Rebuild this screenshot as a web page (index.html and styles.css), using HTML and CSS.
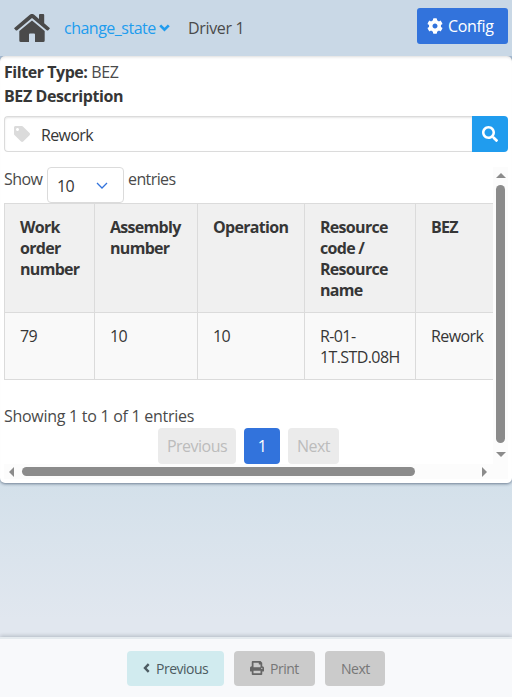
FILE: index.html
```html
<!DOCTYPE html>
<html lang="en">
<head>
<meta charset="utf-8">
<title>Work orders</title>
<link rel="stylesheet" href="styles.css">
</head>
<body>
<header class="navbar">
  <svg class="home" viewBox="0 0 36 28"><path d="M0 14.2 15.8.8Q18 -.9 20.2.8L25 4.900V1Q25 0 26 0H29.200Q30.200 0 30.200 1V9.300L36 14.200 34.300 16.200Q33.500 16.800 32.700 16.200L18 3.900 3.300 16.200Q2.500 16.800 1.700 16.200Z"/><path d="M5.300 17 18 6.500 30.700 17V26.500Q30.700 28 29.200 28H21V20.500Q21 19.500 20 19.500H16Q15 19.500 15 20.500V28H6.800Q5.300 28 5.300 26.500Z"/></svg>
  <a class="state">change_state</a>
  <svg class="chev" viewBox="0 0 11 8"><path d="m1.200 1.400 4.300 4.300 4.300-4.300"/></svg>
  <span class="driver">Driver 1</span>
  <button class="config"><svg viewBox="0 0 512 512"><path d="M487.400 315.700l-42.600-24.600c4.300-23.200 4.300-47 0-70.200l42.600-24.600c4.900-2.800 7.100-8.600 5.500-14-11.100-35.600-30-67.800-54.700-94.600-3.800-4.100-10-5.100-14.800-2.300L380.800 110c-17.900-15.400-38.500-27.300-60.800-35.100V25.800c0-5.600-3.900-10.500-9.400-11.700-36.700-8.200-74.300-7.800-109.200 0-5.500 1.200-9.400 6.100-9.400 11.700V75c-22.200 7.900-42.800 19.800-60.800 35.100L88.700 85.500c-4.900-2.800-11-1.900-14.800 2.300-24.700 26.700-43.600 58.900-54.700 94.600-1.700 5.400.6 11.200 5.500 14L67.300 221c-4.300 23.200-4.300 47 0 70.200l-42.600 24.600c-4.900 2.800-7.100 8.600-5.500 14 11.100 35.600 30 67.800 54.700 94.600 3.800 4.100 10 5.100 14.800 2.300l42.600-24.600c17.900 15.400 38.500 27.300 60.800 35.100v49.200c0 5.600 3.900 10.500 9.400 11.700 36.700 8.200 74.300 7.800 109.200 0 5.500-1.200 9.400-6.100 9.400-11.700v-49.200c22.200-7.900 42.800-19.800 60.800-35.100l42.600 24.600c4.900 2.800 11 1.900 14.800-2.300 24.700-26.700 43.600-58.900 54.700-94.600 1.500-5.500-.7-11.300-5.600-14.100zM256 336c-44.100 0-80-35.900-80-80s35.900-80 80-80 80 35.900 80 80-35.900 80-80 80z"/></svg>Config</button>
</header>
<main class="card">
  <div class="line"><strong class="filter">Filter Type:</strong> <span class="bezv">BEZ</span></div>
  <div class="line"><strong class="desc">BEZ Description</strong></div>
  <div class="search">
    <div class="field"><svg viewBox="0 0 512 512"><path d="M0 252.100V48C0 21.500 21.500 0 48 0h204.100a48 48 0 0 1 33.900 14.100l211.900 211.900c18.700 18.700 18.700 49.100 0 67.900L293.800 497.900c-18.700 18.700-49.100 18.700-67.900 0L14.100 286.100A48 48 0 0 1 0 252.100zM112 64c-26.500 0-48 21.500-48 48s21.500 48 48 48 48-21.500 48-48-21.500-48-48-48z"/></svg><span>Rework</span></div>
    <button class="go"><svg viewBox="0 0 512 512"><path d="M505 442.700L405.300 343c-4.500-4.500-10.600-7-17-7H372c27.600-35.300 44-79.700 44-128C416 93.100 322.900 0 208 0S0 93.100 0 208s93.100 208 208 208c48.300 0 92.700-16.400 128-44v16.300c0 6.400 2.500 12.500 7 17l99.700 99.700c9.400 9.400 24.600 9.400 33.900 0l28.300-28.300c9.400-9.400 9.400-24.600.1-34zM208 336c-70.700 0-128-57.200-128-128 0-70.700 57.200-128 128-128 70.700 0 128 57.200 128 128 0 70.700-57.200 128-128 128z"/></svg></button>
  </div>
  <div class="scroller">
    <div class="view">
      <div class="length"><span class="show">Show</span><div class="select"><span>10</span><svg viewBox="0 0 12 8"><path d="m1 1 5 5 5-5"/></svg></div><span>entries</span></div>
      <table>
        <colgroup><col class="c1"><col class="c2"><col class="c3"><col class="c4"><col class="c5"></colgroup>
        <thead><tr><th>Work<br>order<br>number</th><th>Assembly<br>number</th><th>Operation</th><th>Resource<br>code /<br>Resource<br>name</th><th>BEZ</th></tr></thead>
        <tbody><tr><td>79</td><td>10</td><td>10</td><td>R-01-<br>1T.STD.08H</td><td>Rework</td></tr></tbody>
      </table>
      <div class="info">Showing 1 to 1 of 1 entries</div>
      <div class="pages"><span class="prev">Previous</span><span class="current">1</span><span class="next">Next</span></div>
    </div>
    <div class="vbar"><i class="up"></i><b></b><i class="down"></i></div>
    <div class="hbar"><i class="left"></i><b></b><i class="right"></i></div>
    <div class="corner"></div>
  </div>
</main>
<footer>
  <button class="fprev"><svg viewBox="0 0 7 10"><path d="M5.700 1.200 2 5l3.700 3.800"/></svg><span>Previous</span></button>
  <button class="fprint"><svg viewBox="0 0 512 512"><path d="M448 192V77.300c0-8.500-3.400-16.600-9.400-22.600L393.400 9.400c-6-6-14.100-9.400-22.600-9.400H96C78.300 0 64 14.300 64 32v160c-35.300 0-64 28.700-64 64v112c0 8.800 7.200 16 16 16h48v96c0 17.700 14.300 32 32 32h320c17.700 0 32-14.300 32-32v-96h48c8.800 0 16-7.200 16-16V256c0-35.300-28.700-64-64-64zm-64 256H128v-96h256v96zm0-224H128V64h192v48c0 8.800 7.200 16 16 16h48v96zm48 72c-13.300 0-24-10.800-24-24 0-13.300 10.700-24 24-24s24 10.700 24 24c0 13.300-10.700 24-24 24z"/></svg><span>Print</span></button>
  <button class="fnext"><span>Next</span></button>
</footer>
</body>
</html>
```
FILE: styles.css
```css
* { box-sizing: border-box; }
body {
  margin: 0;
  height: 697px;
  overflow: hidden;
  display: flex;
  flex-direction: column;
  font: 16px/24px "Open Sans", "Noto Sans", sans-serif;
  letter-spacing: -0.35px;
  color: #4a4a4a;
  background: linear-gradient(#a9bfd5 56px, #d3e0ea 480px, #e1e7ef 620px);
}
button { border: 0; padding: 0; font: inherit; letter-spacing: inherit; display: flex; align-items: center; }
svg { display: block; flex: none; fill: currentColor; }
.navbar { height: 56px; flex: none; display: flex; align-items: center; padding: 0 4px 0 14px; background: #c9d8e6; }
.home { width: 36px; height: 28px; }
.state { margin-left: 14px; width: 93px; color: #209cee; white-space: nowrap; letter-spacing: -.5px; }
.chev { width: 11px; height: 8px; margin-left: 2px; }
.chev path { fill: none; stroke: #209cee; stroke-width: 2.700; }
.driver { margin-left: 18px; }
.config { width: 91px; height: 36px; margin: -4px 0 0 auto; padding-left: 10px; gap: 5px; border-radius: 3px; background: #3273dc; color: #fff; }
.config svg { width: 16px; height: 16px; }
.card { flex: none; height: 427px; padding: 4px; border-radius: 5px; background: #fff; box-shadow: 0 1px 3px rgba(10, 30, 60, .5), inset 0 3px 3px -2px rgba(10, 10, 10, .14); clip-path: inset(0 0 -5px); }
.line { height: 24px; }
strong { color: #363636; }
.filter { letter-spacing: -.45px; }
.desc { letter-spacing: -.4px; }
.search { display: flex; height: 36px; margin-top: 8px; }
.field { flex: 1; display: flex; align-items: center; padding-left: 9px; gap: 11px; border: 1px solid #dbdbdb; border-right: 0; border-radius: 4px 0 0 4px; box-shadow: inset 0 1px 2px rgba(10, 10, 10, .1); color: #363636; }
.field svg { width: 16px; height: 16px; color: #dbdbdb; }
.field span { padding-top: 2px; letter-spacing: -.65px; }
.go { width: 36px; justify-content: center; background: #209cee; color: #fff; border-radius: 0 4px 4px 0; }
.go svg { width: 16px; height: 16px; }
.scroller { margin-top: 15px; display: grid; grid-template: 297px 15px / 489px 15px; }
.view { overflow: hidden; }
.length { display: flex; height: 36px; letter-spacing: -.6px; }
.show { width: 43px; }
.select { width: 77px; height: 36px; margin-right: 4px; padding: 1px 15px 0 9px; display: flex; align-items: center; justify-content: space-between; border: 1px solid #dbdbdb; border-radius: 4px; color: #363636; }
.select svg { width: 12px; height: 8px; fill: none; stroke: #3273dc; stroke-width: 1.300; }
table { table-layout: fixed; width: 508px; border-collapse: separate; border-spacing: 0; border-left: 1px solid #dbdbdb; line-height: 21px; color: #363636; }
.c1 { width: 90px; }
.c2 { width: 103px; }
.c3 { width: 107px; }
.c4 { width: 111px; }
.c5 { width: 97px; }
th, td { padding: 13px 0 0 15px; text-align: left; vertical-align: top; white-space: nowrap; border-right: 1px solid #dbdbdb; }
th { height: 110px; border-top: 1px solid #dbdbdb; border-bottom: 1px solid #dbdbdb; background: #f0f0f0; letter-spacing: -.7px; }
td { height: 67px; border-bottom: 1px solid #dbdbdb; background: #f9f9f9; letter-spacing: -.6px; }
.info { margin-top: 24px; height: 24px; letter-spacing: -.28px; }
.pages { display: flex; gap: 8px; margin-left: 154px; }
.pages span { height: 36px; line-height: 37px; text-align: center; border-radius: 4px; background: #ebebeb; color: #bcbcbc; letter-spacing: -.5px; }
.pages .prev { width: 78px; }
.pages .current { width: 36px; background: #3273dc; color: #fff; }
.pages .next { width: 51px; }
.vbar, .hbar, .corner { background: #fcfcfc; }
.vbar { display: flex; flex-direction: column; align-items: center; padding-top: 6px; }
.vbar b { width: 9px; height: 258px; margin: 7px 0 9px; border-radius: 5px; background: #8b8b8b; }
.hbar { display: flex; align-items: center; padding-left: 5px; }
.hbar b { width: 393px; height: 9px; margin: 0 67px 0 8px; border-radius: 5px; background: #8b8b8b; }
i { width: 0; height: 0; flex: none; }
.up { border: solid transparent; border-width: 0 5px 5px; border-bottom-color: #8b8b8b; }
.down { border: solid transparent; border-width: 5px 5px 0; border-top-color: #8b8b8b; }
.left { border: solid transparent; border-width: 5px 5px 5px 0; border-right-color: #8b8b8b; }
.right { border: solid transparent; border-width: 5px 0 5px 5px; border-left-color: #8b8b8b; }
footer { flex: none; height: 60px; margin-top: auto; padding-top: 12px; border-top: 2px solid #e5ebef; display: flex; justify-content: center; align-items: flex-start; gap: 10px; background: #f8f9fb; box-shadow: 0 -1px 4px rgba(10, 20, 30, .22); font-size: 14px; letter-spacing: -.5px; }
footer button { height: 35px; border-radius: 4px; background: #cbcbcb; color: #777; padding: 1px 0 0 16px; }
.fprev { width: 97px; gap: 6px; background: #d1ebef; color: #4d5b62; }
.fprev svg { width: 7px; height: 10px; margin-top: -2px; fill: none; stroke: currentColor; stroke-width: 2.400; }
.fprint { width: 81px; gap: 6px; }
.fprint svg { width: 14px; height: 14px; margin-top: -2px; color: #666; }
.fnext { width: 60px; }
```
